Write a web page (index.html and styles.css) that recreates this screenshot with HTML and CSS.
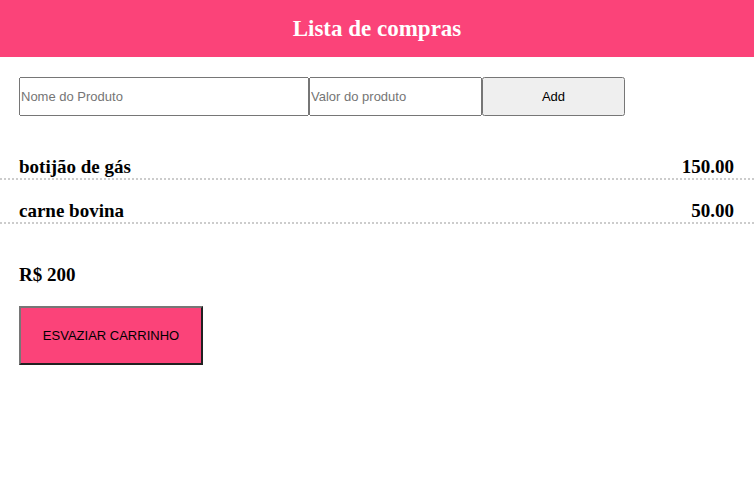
FILE: index.html
```html
<!DOCTYPE html>
<html lang="pt-BR">
<head>
<meta charset="UTF-8">
<meta name="viewport" content="width=device-width, initial-scale=1">
<title>Lista de compras</title>
<link rel="stylesheet" href="styles.css">
</head>
<body>
<header class="header">
  <h1 class="title">Lista de compras</h1>
</header>
<main>
  <form class="form">
    <input class="field name" type="text" placeholder="Nome do Produto" aria-label="Nome do Produto">
    <input class="field price" type="text" placeholder="Valor do produto" aria-label="Valor do produto">
    <button class="add" type="button">Add</button>
  </form>
  <ul class="list">
    <li class="item"><span>botijão de gás</span><span>150.00</span></li>
    <li class="item"><span>carne bovina</span><span>50.00</span></li>
  </ul>
  <section class="summary">
    <p class="total">R$ 200</p>
    <button class="clear" type="button">ESVAZIAR CARRINHO</button>
  </section>
</main>
</body>
</html>
```
FILE: styles.css
```css
* {
  margin: 0;
  padding: 0;
  box-sizing: border-box;
}

body {
  font-family: "Liberation Serif", "Times New Roman", serif;
  background: #fff;
  color: #000;
}

.header {
  padding: 15px;
  background: #fb4379;
  color: #fff;
  text-align: center;
}

.title {
  font-size: 23px;
  line-height: 27px;
}

.form {
  display: flex;
  padding: 20px 19px;
}

.field,
.add,
.clear {
  font-family: "Liberation Sans", Arial, sans-serif;
  font-size: 13px;
}

.field,
.add {
  height: 39px;
}

.name {
  width: 290px;
}

.price {
  width: 173px;
}

.add {
  width: 143px;
}

.list {
  list-style: none;
  padding-top: 20px;
}

.item {
  display: flex;
  justify-content: space-between;
  margin-bottom: 20px;
  padding: 0 20px 0 19px;
  border-bottom: 2px dotted #ccc;
  font-size: 19px;
  font-weight: bold;
  line-height: 22px;
}

.summary {
  padding: 20px 19px;
}

.total {
  margin-bottom: 20px;
  font-size: 19px;
  font-weight: bold;
  line-height: 22px;
}

.clear {
  min-width: 184px;
  padding: 20px;
  border: 2px solid;
  border-color: #767676 #212121 #212121 #767676;
  background: #fb4379;
  line-height: 15px;
}
```
